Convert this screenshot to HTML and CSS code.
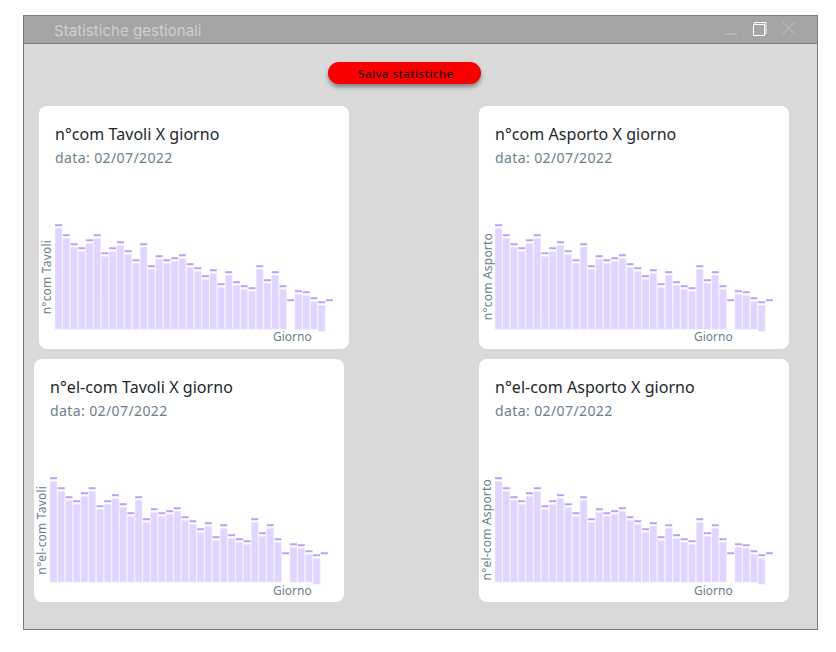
FILE: index.html
```html
<!DOCTYPE html>
<html lang="it">
<head>
<meta charset="utf-8">
<title>Statistiche gestionali</title>
<link rel="stylesheet" href="styles.css">
</head>
<body>
<svg class="defs" width="0" height="0" aria-hidden="true">
  <defs>
    <g id="bars">
      <path class="fills" d="M0 6.33h7V107.3H0zM7.74 16.33h7V107.3h-7zM15.48 25.33h7V107.3h-7zM23.22 29.33h7V107.3h-7zM30.96 21.33h7V107.3h-7zM38.7 16.33h7V107.3h-7zM46.44 34.33h7V107.3h-7zM54.18 29.33h7V107.3h-7zM61.92 23.33h7V107.3h-7zM69.66 32.33h7V107.3h-7zM77.4 41.33h7V107.3h-7zM85.14 25.33h7V107.3h-7zM92.88 47.33h7V107.3h-7zM100.62 37.33h7V107.3h-7zM108.36 41.33h7V107.3h-7zM116.1 39.33h7V107.3h-7zM123.84 36.33h7V107.3h-7zM131.58 45.33h7V107.3h-7zM139.32 49.33h7V107.3h-7zM147.06 57.33h7V107.3h-7zM154.8 51.33h7V107.3h-7zM162.54 65.33h7V107.3h-7zM170.28 53.33h7V107.3h-7zM178.02 63.33h7V107.3h-7zM185.76 67.33h7V107.3h-7zM193.5 69.33h7V107.3h-7zM201.24 47.33h7V107.3h-7zM208.98 61.33h7V107.3h-7zM216.72 53.33h7V107.3h-7zM224.46 67.33h7V107.3h-7zM239.94 72.33h7V107.3h-7zM247.68 73.33h7V107.3h-7zM255.42 79.33h7V107.3h-7zM263.16 83.33h7V109.3h-7z"/>
      <path class="caps" d="M0 3.33h7M7.74 13.33h7M15.48 22.33h7M23.22 26.33h7M30.96 18.33h7M38.7 13.33h7M46.44 31.33h7M54.18 26.33h7M61.92 20.33h7M69.66 29.33h7M77.4 38.33h7M85.14 22.33h7M92.88 44.33h7M100.62 34.33h7M108.36 38.33h7M116.1 36.33h7M123.84 33.33h7M131.58 42.33h7M139.32 46.33h7M147.06 54.33h7M154.8 48.33h7M162.54 62.33h7M170.28 50.33h7M178.02 60.33h7M185.76 64.33h7M193.5 66.33h7M201.24 44.33h7M208.98 58.33h7M216.72 50.33h7M224.46 64.33h7M232.2 78.33h7M239.94 69.33h7M247.68 70.33h7M255.42 76.33h7M263.16 80.33h7M270.9 78.33h7"/>
    </g>
  </defs>
</svg>

<main class="window">
  <header class="titlebar">
    <h1 class="window-title">Statistiche gestionali</h1>
    <div class="window-controls">
      <svg class="control" width="13" height="14" viewBox="0 0 13 14"><path class="control-dim" d="M0 12h13"/></svg>
      <svg class="control" width="15" height="15" viewBox="0 0 15 15"><path class="control-bright" d="M1.5 2.5h11v11h-11z"/><path class="control-bright" d="M2.5 2.5v-2h11.5v11h-1.5"/></svg>
      <svg class="control" width="14" height="14" viewBox="0 0 14 14"><path class="control-dim" d="M.5 0l12.5 12.5M13 0L.5 12.5"/></svg>
    </div>
  </header>

  <div class="content">
    <button class="save-button" type="button">Salva statistiche</button>

    <div class="cards">
      <section class="card">
        <h2 class="card-title">n°com Tavoli X giorno</h2>
        <p class="card-date">data: 02/07/2022</p>
        <svg class="chart" viewBox="0 0 282 108"><use href="#bars"/></svg>
        <span class="axis-x axis-x-wide">Giorno</span>
        <span class="axis-y axis-y-a">n°com Tavoli</span>
      </section>

      <section class="card">
        <h2 class="card-title">n°com Asporto X giorno</h2>
        <p class="card-date">data: 02/07/2022</p>
        <svg class="chart" viewBox="0 0 282 108"><use href="#bars"/></svg>
        <span class="axis-x">Giorno</span>
        <span class="axis-y axis-y-b">n°com Asporto</span>
      </section>

      <section class="card card-shifted">
        <h2 class="card-title">n°el-com Tavoli X giorno</h2>
        <p class="card-date">data: 02/07/2022</p>
        <svg class="chart" viewBox="0 0 282 108"><use href="#bars"/></svg>
        <span class="axis-x axis-x-low axis-x-widest">Giorno</span>
        <span class="axis-y axis-y-c">n°el-com Tavoli</span>
      </section>

      <section class="card">
        <h2 class="card-title">n°el-com Asporto X giorno</h2>
        <p class="card-date">data: 02/07/2022</p>
        <svg class="chart" viewBox="0 0 282 108"><use href="#bars"/></svg>
        <span class="axis-x axis-x-low">Giorno</span>
        <span class="axis-y axis-y-d">n°el-com Asporto</span>
      </section>
    </div>
  </div>
</main>
</body>
</html>
```

FILE: styles.css
```css
* {
  box-sizing: border-box;
}

html,
body {
  margin: 0;
  height: 100%;
  background: #fff;
}

body {
  padding: 15px 0 0 23px;
  font-family: "Noto Sans", "Liberation Sans", sans-serif;
}

.defs {
  position: absolute;
}

.window {
  width: 795px;
  height: 615px;
  border: 1px solid #7b7b7b;
  background: #d9d9d9;
}

.titlebar {
  display: flex;
  align-items: center;
  justify-content: space-between;
  height: 28px;
  padding: 1px 21px 0 30px;
  background: #a5a5a5;
  border-bottom: 1px solid #7b7b7b;
}

.window-title {
  margin: 0;
  font-family: Inter, sans-serif;
  font-size: 15px;
  font-weight: 400;
  letter-spacing: 0.05px;
  color: #cfcfcf;
}

.window-controls {
  display: flex;
  align-self: flex-start;
  align-items: flex-start;
  gap: 15px;
  margin-top: 5px;
}

.control {
  display: block;
  fill: none;
  overflow: visible;
}

.control-dim {
  fill: none;
  stroke: #c4c4c4;
  stroke-width: 1;
}

.control-bright {
  fill: none;
  stroke: #fff;
  stroke-width: 1;
}

.content {
  padding: 18px 0 0 15px;
}

.save-button {
  display: block;
  width: 153px;
  height: 22px;
  margin: 0 0 22px 289px;
  padding: 0 0 0 3px;
  border: 0;
  border-radius: 11px;
  background: #f80000;
  box-shadow: 0 3px 4px rgba(0, 0, 0, 0.4);
  font-family: inherit;
  font-size: 11.5px;
  letter-spacing: 0.55px;
  color: #000;
}

.cards {
  display: grid;
  grid-template-columns: 310px 310px;
  column-gap: 130px;
  row-gap: 10px;
}

.card {
  position: relative;
  width: 310px;
  height: 243px;
  padding: 17px 0 0 16px;
  border-radius: 8px;
  background: #fff;
}

.card-shifted {
  margin-left: -5px;
}

.card-title {
  margin: 0;
  font-size: 16px;
  font-weight: 400;
  letter-spacing: 0.05px;
  line-height: 22px;
  color: #21272a;
}

.card-date {
  margin: 3px 0 0;
  font-size: 14px;
  letter-spacing: 0.4px;
  line-height: 20px;
  color: #697f8c;
}

.chart {
  display: block;
  width: 282px;
  height: 108px;
  margin-top: 54px;
  overflow: visible;
}

.fills {
  fill: #e0d5fe;
  stroke: #f3effe;
  stroke-width: 0.5;
}

.caps {
  fill: none;
  stroke: #b8a0fc;
  stroke-width: 2;
}

.axis-x {
  display: block;
  margin-left: 199px;
  font-size: 12px;
  line-height: 14px;
  color: #697f8c;
}

.axis-x-low {
  margin-top: 1px;
}

.axis-x-wide {
  margin-left: 218px;
}

.axis-x-widest {
  margin-left: 223px;
}

.axis-y {
  position: absolute;
  writing-mode: vertical-rl;
  transform: rotate(180deg);
  font-size: 12px;
  letter-spacing: 0.2px;
  line-height: 14px;
  color: #697f8c;
}

.axis-y-a {
  left: 1px;
  bottom: 35px;
}

.axis-y-b {
  left: 2px;
  bottom: 29px;
}

.axis-y-c {
  left: 1px;
  bottom: 27px;
}

.axis-y-d {
  left: 1px;
  bottom: 22px;
}
```
